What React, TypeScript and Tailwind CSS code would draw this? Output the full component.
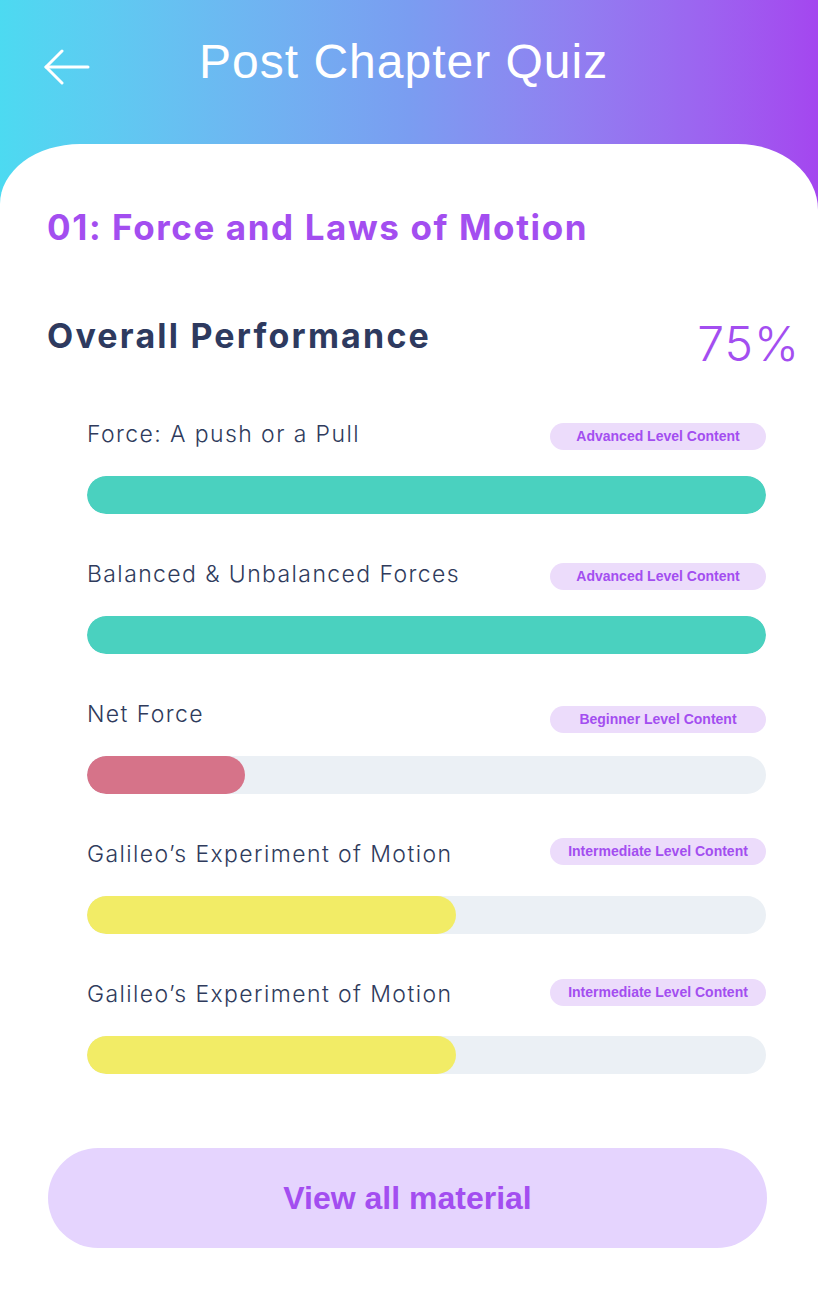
import React from 'react';

type Topic = {
  title: string;
  level: string;
  percent: number;
  color: string;
  badgeShift: string;
};

const topics: Topic[] = [
  { title: 'Force: A push or a Pull', level: 'Advanced Level Content', percent: 100, color: 'bg-[#4ad1bf]', badgeShift: 'translate-y-[2px]' },
  { title: 'Balanced & Unbalanced Forces', level: 'Advanced Level Content', percent: 100, color: 'bg-[#4ad1bf]', badgeShift: 'translate-y-[2px]' },
  { title: 'Net Force', level: 'Beginner Level Content', percent: 23.3, color: 'bg-[#d67389]', badgeShift: 'translate-y-[5px]' },
  { title: 'Galileo\u2019s Experiment of Motion', level: 'Intermediate Level Content', percent: 54.3, color: 'bg-[#f2ec66]', badgeShift: '-translate-y-[3px]' },
  { title: 'Galileo\u2019s Experiment of Motion', level: 'Intermediate Level Content', percent: 54.3, color: 'bg-[#f2ec66]', badgeShift: '-translate-y-[2px]' },
];

const BackArrow = () => (
  <svg width="46" height="36" viewBox="0 0 46 36" fill="none" stroke="white" strokeWidth="3" strokeLinecap="round" strokeLinejoin="round">
    <path d="M44 18H2" />
    <path d="M18 2L2 18L18 34" />
  </svg>
);

const TopicRow: React.FC<{ topic: Topic }> = ({ topic }) => (
  <div className="pb-[44px]">
    <div className="flex items-center justify-between h-[32px]">
      <span className="text-[23px] leading-[32px] font-light tracking-[1.4px] text-[#2f3b5c]">{topic.title}</span>
      <span className={`w-[216px] h-[27px] rounded-full bg-[#ecdcfb] flex items-center justify-center text-[14px] font-bold text-[#a34ef0] font-['Liberation_Sans',sans-serif] ${topic.badgeShift}`}>
        {topic.level}
      </span>
    </div>
    <div className="mt-[26px] h-[38px] rounded-full bg-[#ebf0f5] overflow-hidden">
      <div className={`h-full rounded-full ${topic.color}`} style={{ width: `${topic.percent}%` }} />
    </div>
  </div>
);

export default function App() {
  return (
    <div className="min-h-screen bg-gradient-to-r from-[#4cdaf1] via-[#7a9df1] to-[#a446ef] font-['Inter','Noto_Sans',sans-serif]">
      <header className="h-[144px] flex items-start pt-[32px] pl-[44px]">
        <div className="mt-[17px]">
          <BackArrow />
        </div>
        <h1 className="ml-[109px] text-[48px] leading-[60px] tracking-[1px] text-white font-['Liberation_Sans',Arial,sans-serif]">
          Post Chapter Quiz
        </h1>
      </header>

      <main className="bg-white rounded-tl-[80px_60px] rounded-tr-[80px_66px] min-h-[1170px] pt-[62px]">
        <h2 className="pl-[47px] text-[35px] leading-[42px] font-bold tracking-[1.6px] text-[#a34ef0]">
          01: Force and Laws of Motion
        </h2>

        <div className="mt-[68px] pl-[47px] pr-[18px] flex items-start justify-between">
          <h3 className="text-[34px] leading-[40px] font-bold tracking-[2.2px] text-[#2e3a5f]">Overall Performance</h3>
          <span className="text-[48px] leading-[56px] font-light tracking-[1px] text-[#a34ef0]">75%</span>
        </div>

        <section className="mt-[46px] pl-[87px] pr-[52px]">
          {topics.map((t, i) => (
            <TopicRow key={i} topic={t} />
          ))}
        </section>

        <div className="mt-[30px] pl-[48px] pr-[51px]">
          <button className="w-full h-[100px] rounded-full bg-[#e5d4fe] text-[#a34ef0] text-[32px] font-bold font-['Liberation_Sans',Arial,sans-serif]">
            View all material
          </button>
        </div>
      </main>
    </div>
  );
}
